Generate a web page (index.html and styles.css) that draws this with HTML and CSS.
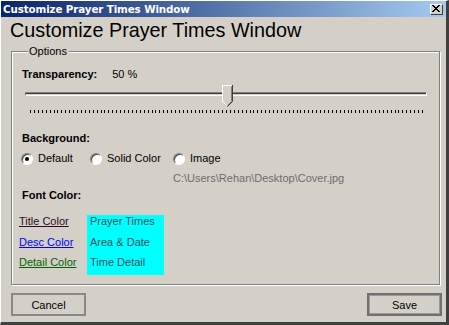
FILE: index.html
```html
<!DOCTYPE html>
<html lang="en">
<head>
  <meta charset="UTF-8" />
  <title>Customize Prayer Times Window</title>
  <link rel="stylesheet" href="styles.css">
</head>
<body>

  <div class="window">
    <!-- Title bar -->
    <div class="titlebar">
      <span class="title-text">Customize Prayer Times Window</span>
      <span class="close-btn">
        <svg width="9" height="8" viewBox="0 0 9 8">
          <path d="M1 0 L8 7 M0 0 L7 7 M8 0 L1 7 M7 0 L0 7" stroke="#000" stroke-width="1" />
        </svg>
      </span>
    </div>

    <div class="content">
      <h1>Customize Prayer Times Window</h1>

      <fieldset class="options">
        <legend>Options</legend>

        <div class="row transparency">
          <span class="label">Transparency:</span>
          <span class="value">50 %</span>
        </div>

        <div class="slider">
          <div class="track"></div>
          <div class="thumb">
            <svg width="12" height="22" viewBox="0 0 12 22">
              <polygon points="0.5,0.5 10.5,0.5 10.5,16.5 5.5,21.5 0.5,16.5" fill="#d4d0c8" />
              <path d="M0.5 17 L0.5 0.5 L10 0.5" stroke="#fff" fill="none" />
              <path d="M9.5 1 L9.5 16.5 L5.5 20.5" stroke="#808080" fill="none" />
              <path d="M10.5 0 L10.5 16.5 L5.5 21.5" stroke="#404040" fill="none" />
              <path d="M0.5 16.5 L4.5 20.5" stroke="#fff" fill="none" />
            </svg>
          </div>
          <div class="ticks"></div>
        </div>

        <div class="row label section">Background:</div>

        <div class="radios">
          <label class="radio"><span class="dot checked"></span>Default</label>
          <label class="radio"><span class="dot"></span>Solid Color</label>
          <div class="image-option">
            <label class="radio"><span class="dot"></span>Image</label>
            <div class="path">C:\Users\Rehan\Desktop\Cover.jpg</div>
          </div>
        </div>

        <div class="row label section font-label">Font Color:</div>

        <div class="colors">
          <div class="links">
            <a class="link title-link">Title Color</a>
            <a class="link desc-link">Desc Color</a>
            <a class="link detail-link">Detail Color</a>
          </div>
          <div class="preview">
            <div>Prayer Times</div>
            <div>Area &amp; Date</div>
            <div>Time Detail</div>
          </div>
        </div>
      </fieldset>

      <div class="buttons">
        <button class="btn">Cancel</button>
        <button class="btn default">Save</button>
      </div>
    </div>
  </div>

</body>
</html>
```

FILE: styles.css
```css
* {
  box-sizing: border-box;
}

body {
  margin: 0;
  padding: 0;
  background: #d4d0c8;
  font-family: 'Liberation Sans', Arial, sans-serif;
  font-size: 11px;
  line-height: 13px;
  color: #000;
}

.window {
  width: 449px;
  height: 325px;
  display: flex;
  flex-direction: column;
  border-style: solid;
  border-width: 1px 3px 3px 1px;
  border-color: #fff #404040 #404040 #fff;
  background: #d4d0c8;
}

.titlebar {
  height: 16px;
  display: flex;
  align-items: center;
  justify-content: space-between;
  padding: 0 3px 0 2px;
  background: linear-gradient(to right, #0a246a, #a6caf0);
}

.title-text {
  color: #fff;
  font-weight: bold;
  font-family: 'DejaVu Sans', sans-serif;
  font-size: 10.3px;
  letter-spacing: -0.1px;
}

.close-btn {
  width: 13px;
  height: 11px;
  display: flex;
  align-items: center;
  justify-content: center;
  background: #d4d0c8;
  border: 1px solid;
  border-color: #fff #404040 #404040 #fff;
}

.content {
  flex: 1;
  display: flex;
  flex-direction: column;
  padding: 0 5px 0 9px;
}

h1 {
  margin: 1px 0 0 0;
  font-size: 19.8px;
  line-height: 24px;
  font-weight: normal;
}

.options {
  margin: 3px 0 0 1px;
  width: 429px;
  height: 240px;
  padding: 10px 0 0 10px;
  border: 1px solid #808080;
  box-shadow: inset 1px 1px 0 #fff, 1px 1px 0 #fff;
}

.options legend {
  padding: 0 2px 0 1px;
  margin-left: 6px;
  background: #d4d0c8;
}

.label {
  font-weight: bold;
}

.transparency {
  display: flex;
  gap: 15px;
}

.slider {
  position: relative;
  margin: 11px 0 0 3px;
  width: 402px;
  height: 26px;
}

.track {
  height: 4px;
  border-style: solid;
  border-width: 1px;
  border-color: #808080 #fff #fff #808080;
  background: linear-gradient(#404040 50%, #d4d0c8 50%);
}

.thumb {
  position: absolute;
  left: 197px;
  top: -7px;
  height: 22px;
}

.ticks {
  margin: 14px 0 0 5px;
  width: 393px;
  height: 3px;
  background: repeating-linear-gradient(to right, #000 0, #000 1px, transparent 1px, transparent 3.92px);
  border-right: 1px solid #000;
}

.section {
  margin-top: 14px;
}

.radios {
  display: flex;
  margin: 7px 0 0 -1px;
}

.radio {
  display: flex;
  align-items: center;
  gap: 5px;
  height: 13px;
}

.radio:nth-child(1) {
  width: 69px;
}

.radio:nth-child(2) {
  width: 83px;
}

.dot {
  width: 12px;
  height: 12px;
  border-radius: 50%;
  border: 1px solid;
  border-color: #808080 #fff #fff #808080;
  box-shadow: inset 1px 1px 0 #404040;
  background: #fff;
  display: flex;
  align-items: center;
  justify-content: center;
}

.dot.checked::after {
  content: "";
  width: 4px;
  height: 4px;
  border-radius: 50%;
  background: #000;
}

.path {
  margin-top: 7px;
  color: #6d6d6d;
}

.font-label {
  margin-top: 4px;
}

.colors {
  display: flex;
  margin: 13px 0 0 -3px;
}

.links {
  width: 68px;
  display: flex;
  flex-direction: column;
  padding-top: 0;
}

.link {
  text-decoration: underline;
  height: 20.5px;
  line-height: 13px;
  padding-top: 0;
}

.title-link {
  color: #2e0a26;
}

.desc-link {
  color: #0000ff;
}

.detail-link {
  color: #006400;
}

.preview {
  width: 77px;
  height: 60px;
  background: #00ffff;
  color: #24505e;
  padding: 0 0 0 3px;
  display: flex;
  flex-direction: column;
  gap: 7.5px;
}

.preview div {
  height: 13px;
}

.buttons {
  display: flex;
  justify-content: space-between;
  margin: 8px 0 0 1px;
  width: 431px;
}

.btn {
  width: 75px;
  height: 23px;
  background: #d4d0c8;
  font-family: 'Liberation Sans', Arial, sans-serif;
  font-size: 11px;
  color: #000;
  border: 2px solid #888;
  padding: 0;
}

.btn.default {
  border: 2px solid #707070;
  box-shadow: inset 0 0 0 1px #9a9a9a;
}
```
